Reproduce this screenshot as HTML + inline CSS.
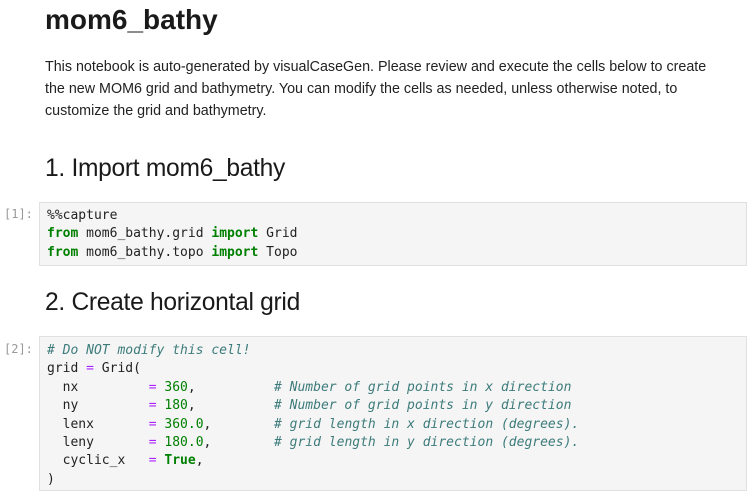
<!DOCTYPE html>
<html><head><meta charset="utf-8"><style>
body{margin:0;background:#fff;width:750px;height:495px;overflow:hidden;font-family:"Liberation Sans",sans-serif;color:#212121;position:relative}
h1{position:absolute;left:45px;top:0;margin:0;font-size:28px;font-weight:bold;line-height:40px;color:#1a1a1a}
.p{position:absolute;left:45px;top:56px;font-size:14.3px;line-height:22px;color:#222}
h2{position:absolute;left:45px;margin:0;font-size:24.6px;font-weight:normal;line-height:30px;color:#1a1a1a;letter-spacing:-0.3px}
.cell{position:absolute;left:39px;width:708px;background:#f5f5f5;border:1px solid #e0e0e0;box-sizing:border-box}
pre{margin:0;position:absolute;left:7px;font-family:"DejaVu Sans Mono","Liberation Mono",monospace;font-size:13px;line-height:18.4px;color:#222}
.pr{position:absolute;left:4px;font-family:"DejaVu Sans Mono",monospace;font-size:12px;color:#999}
.k{color:#008000;font-weight:bold}.n{color:#008000}.o{color:#aa22ff}.c{color:#3d7b7b;font-style:italic}
</style></head><body>
<h1>mom6_bathy</h1>
<div class="p">This notebook is auto-generated by visualCaseGen. Please review and execute the cells below to create<br>the new MOM6 grid and bathymetry. You can modify the cells as needed, unless otherwise noted, to<br>customize the grid and bathymetry.</div>
<h2 style="top:154px">1. Import mom6_bathy</h2>
<div class="pr" style="top:207px">[1]:</div>
<div class="cell" style="top:202px;height:64px"><pre style="top:4px">%%capture
<span class="k">from</span> mom6_bathy.grid <span class="k">import</span> Grid
<span class="k">from</span> mom6_bathy.topo <span class="k">import</span> Topo</pre></div>
<h2 style="top:288px">2. Create horizontal grid</h2>
<div class="pr" style="top:342px">[2]:</div>
<div class="cell" style="top:336px;height:155px"><pre style="top:5px"><span class="c"># Do NOT modify this cell!</span>
grid <span class="o">=</span> Grid(
  nx         <span class="o">=</span> <span class="n">360</span>,          <span class="c"># Number of grid points in x direction</span>
  ny         <span class="o">=</span> <span class="n">180</span>,          <span class="c"># Number of grid points in y direction</span>
  lenx       <span class="o">=</span> <span class="n">360.0</span>,        <span class="c"># grid length in x direction (degrees).</span>
  leny       <span class="o">=</span> <span class="n">180.0</span>,        <span class="c"># grid length in y direction (degrees).</span>
  cyclic_x   <span class="o">=</span> <span class="k">True</span>,
)</pre></div>
</body></html>
